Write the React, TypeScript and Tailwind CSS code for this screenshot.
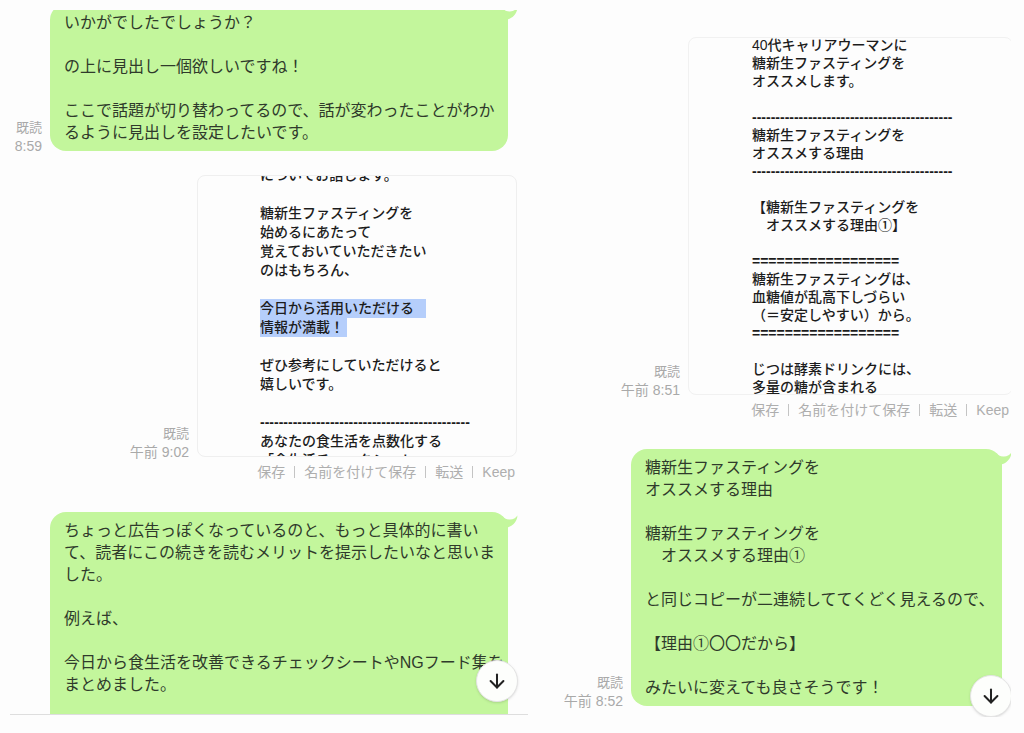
import React from "react";
import { ArrowDown } from "lucide-react";

interface MetaProps {
	time: string;
}

const Meta = ({ time }: MetaProps) => (
	<div className="-mb-1 shrink-0 whitespace-nowrap text-right leading-[18px] text-[#a9a9a9]">
		<p className="text-[13px] leading-[18px]">既読</p>
		<time className="block text-sm leading-[18px]">{time}</time>
	</div>
);

interface BubbleProps {
	text: string;
	className: string;
}

const Bubble = ({ text, className }: BubbleProps) => (
	<div className={`relative w-full bg-[#c3f69c] px-[14px] pt-2 text-[#2f3a2b] ${className}`}>
		<p className="whitespace-pre text-base leading-[22px]">{text}</p>
		<svg
			viewBox="0 0 20 18"
			className="absolute top-0 -right-[10px] h-[18px] w-5 fill-[#c3f69c]"
			aria-hidden="true"
		>
			<path d="M4 4C6 6.5 8.5 7.6 12 7.4C15.5 7.2 17.5 6 19.4 3.4C19.4 8.5 15.5 13.8 10 15.2V18H4Z" />
		</svg>
	</div>
);

const CardText = ({ text }: { text: string }) => (
	<p>
		{text.split("\n").map((line, index) => (
			<span
				key={index}
				className={/^[-=]/.test(line) ? "block font-bold" : "block"}
			>
				{line || " "}
			</span>
		))}
	</p>
);

const actions = ["保存", "名前を付けて保存", "転送", "Keep"];

const ImageActions = () => (
	<div className="mt-[5px] flex justify-end text-sm leading-5 text-[#aeaeae]">
		{actions.map((label, index) => (
			<React.Fragment key={label}>
				{index > 0 && <span className="mx-[9px] my-1 w-px bg-[#c4c4c4]" />}
				<button type="button" className="whitespace-nowrap">
					{label}
				</button>
			</React.Fragment>
		))}
	</div>
);

const ScrollButton = ({ className }: { className: string }) => (
	<button
		type="button"
		aria-label="一番下へ"
		className={`absolute flex size-[42px] items-center justify-center rounded-full border border-[#e4e4e4] bg-[#fdfefc] text-[#222] shadow-sm ${className}`}
	>
		<ArrowDown size={22} strokeWidth={2.2} />
	</button>
);

const introBefore = `についてお話します。

糖新生ファスティングを
始めるにあたって
覚えておいていただきたい
のはもちろん、
`;

const introAfter = `
ぜひ参考にしていただけると
嬉しいです。

${"-".repeat(45)}
あなたの食生活を点数化する
「食生活チェックシート」`;

const dashes = "-".repeat(43);
const doubles = "=".repeat(18);

const reasonText = `40代キャリアウーマンに
糖新生ファスティングを
オススメします。

${dashes}
糖新生ファスティングを
オススメする理由
${dashes}

【糖新生ファスティングを
　オススメする理由①】

${doubles}
糖新生ファスティングは、
血糖値が乱高下しづらい
（＝安定しやすい）から。
${doubles}

じつは酵素ドリンクには、
多量の糖が含まれる`;

const headingMessage = `いかがでしたでしょうか？

の上に見出し一個欲しいですね！

ここで話題が切り替わってるので、話が変わったことがわか
るように見出しを設定したいです。`;

const meritMessage = `ちょっと広告っぽくなっているのと、もっと具体的に書い
て、読者にこの続きを読むメリットを提示したいなと思いま
した。

例えば、

今日から食生活を改善できるチェックシートやNGフード集を
まとめました。`;

const copyMessage = `糖新生ファスティングを
オススメする理由

糖新生ファスティングを
　オススメする理由①

と同じコピーが二連続しててくどく見えるので、

【理由①〇〇だから】

みたいに変えても良さそうです！`;

const App = () => {
	return (
		<main
			lang="ja"
			className="grid min-h-screen grid-cols-[518fr_451fr] items-start gap-8 bg-[#fdfdfd] py-[10px] pr-[13px] pl-[10px] font-['Liberation_Sans','Noto_Sans_CJK_JP',sans-serif]"
		>
			<section className="relative overflow-hidden border-b border-[#dedede]">
				<div className="-mt-[6px] flex items-end justify-end gap-2 pr-5">
					<Meta time="8:59" />
					<Bubble text={headingMessage} className="max-w-[458px] rounded-2xl pb-[7px]" />
				</div>

				<div className="mt-6 flex items-end justify-end gap-2 pr-[11px]">
					<Meta time="午前 9:02" />
					<div className="h-[282px] w-80 overflow-hidden rounded-lg border border-[#efefef] pl-[62px] text-sm font-medium leading-[19px] text-[#1c1c1c]">
						<div className="-mt-[10px] whitespace-pre">
							<CardText text={introBefore} />
							<p className="flex flex-col items-start">
								<mark className="bg-[#b5cefb] pr-3 text-inherit">今日から活用いただける</mark>
								<mark className="bg-[#b5cefb] pr-[3px] text-inherit">情報が満載！</mark>
							</p>
							<CardText text={introAfter} />
						</div>
					</div>
				</div>
				<div className="pr-[13px]">
					<ImageActions />
				</div>

				<div className="mt-[30px] flex justify-end pr-5">
					<Bubble text={meritMessage} className="max-w-[458px] rounded-t-2xl pb-[18px]" />
				</div>
				<ScrollButton className="right-[10px] bottom-3" />
			</section>

			<section className="relative overflow-hidden pt-[27px] pb-[11px]">
				<div className="-mr-0.5 flex items-end justify-end gap-2">
					<Meta time="午前 8:51" />
					<div className="h-[358px] w-[325px] overflow-hidden rounded-lg border border-[#f1f1f1] pl-[63px] text-sm font-medium leading-[18px] text-[#1c1c1c]">
						<div className="-mt-0.5 whitespace-pre">
							<CardText text={reasonText} />
						</div>
					</div>
				</div>
				<div className="pr-0.5">
					<ImageActions />
				</div>

				<div className="mt-[29px] flex items-end justify-end gap-2 pr-[9px]">
					<Meta time="午前 8:52" />
					<Bubble text={copyMessage} className="max-w-[371px] rounded-2xl pb-[7px]" />
				</div>
				<ScrollButton className="-right-px bottom-0" />
			</section>
		</main>
	);
};

export default App;
